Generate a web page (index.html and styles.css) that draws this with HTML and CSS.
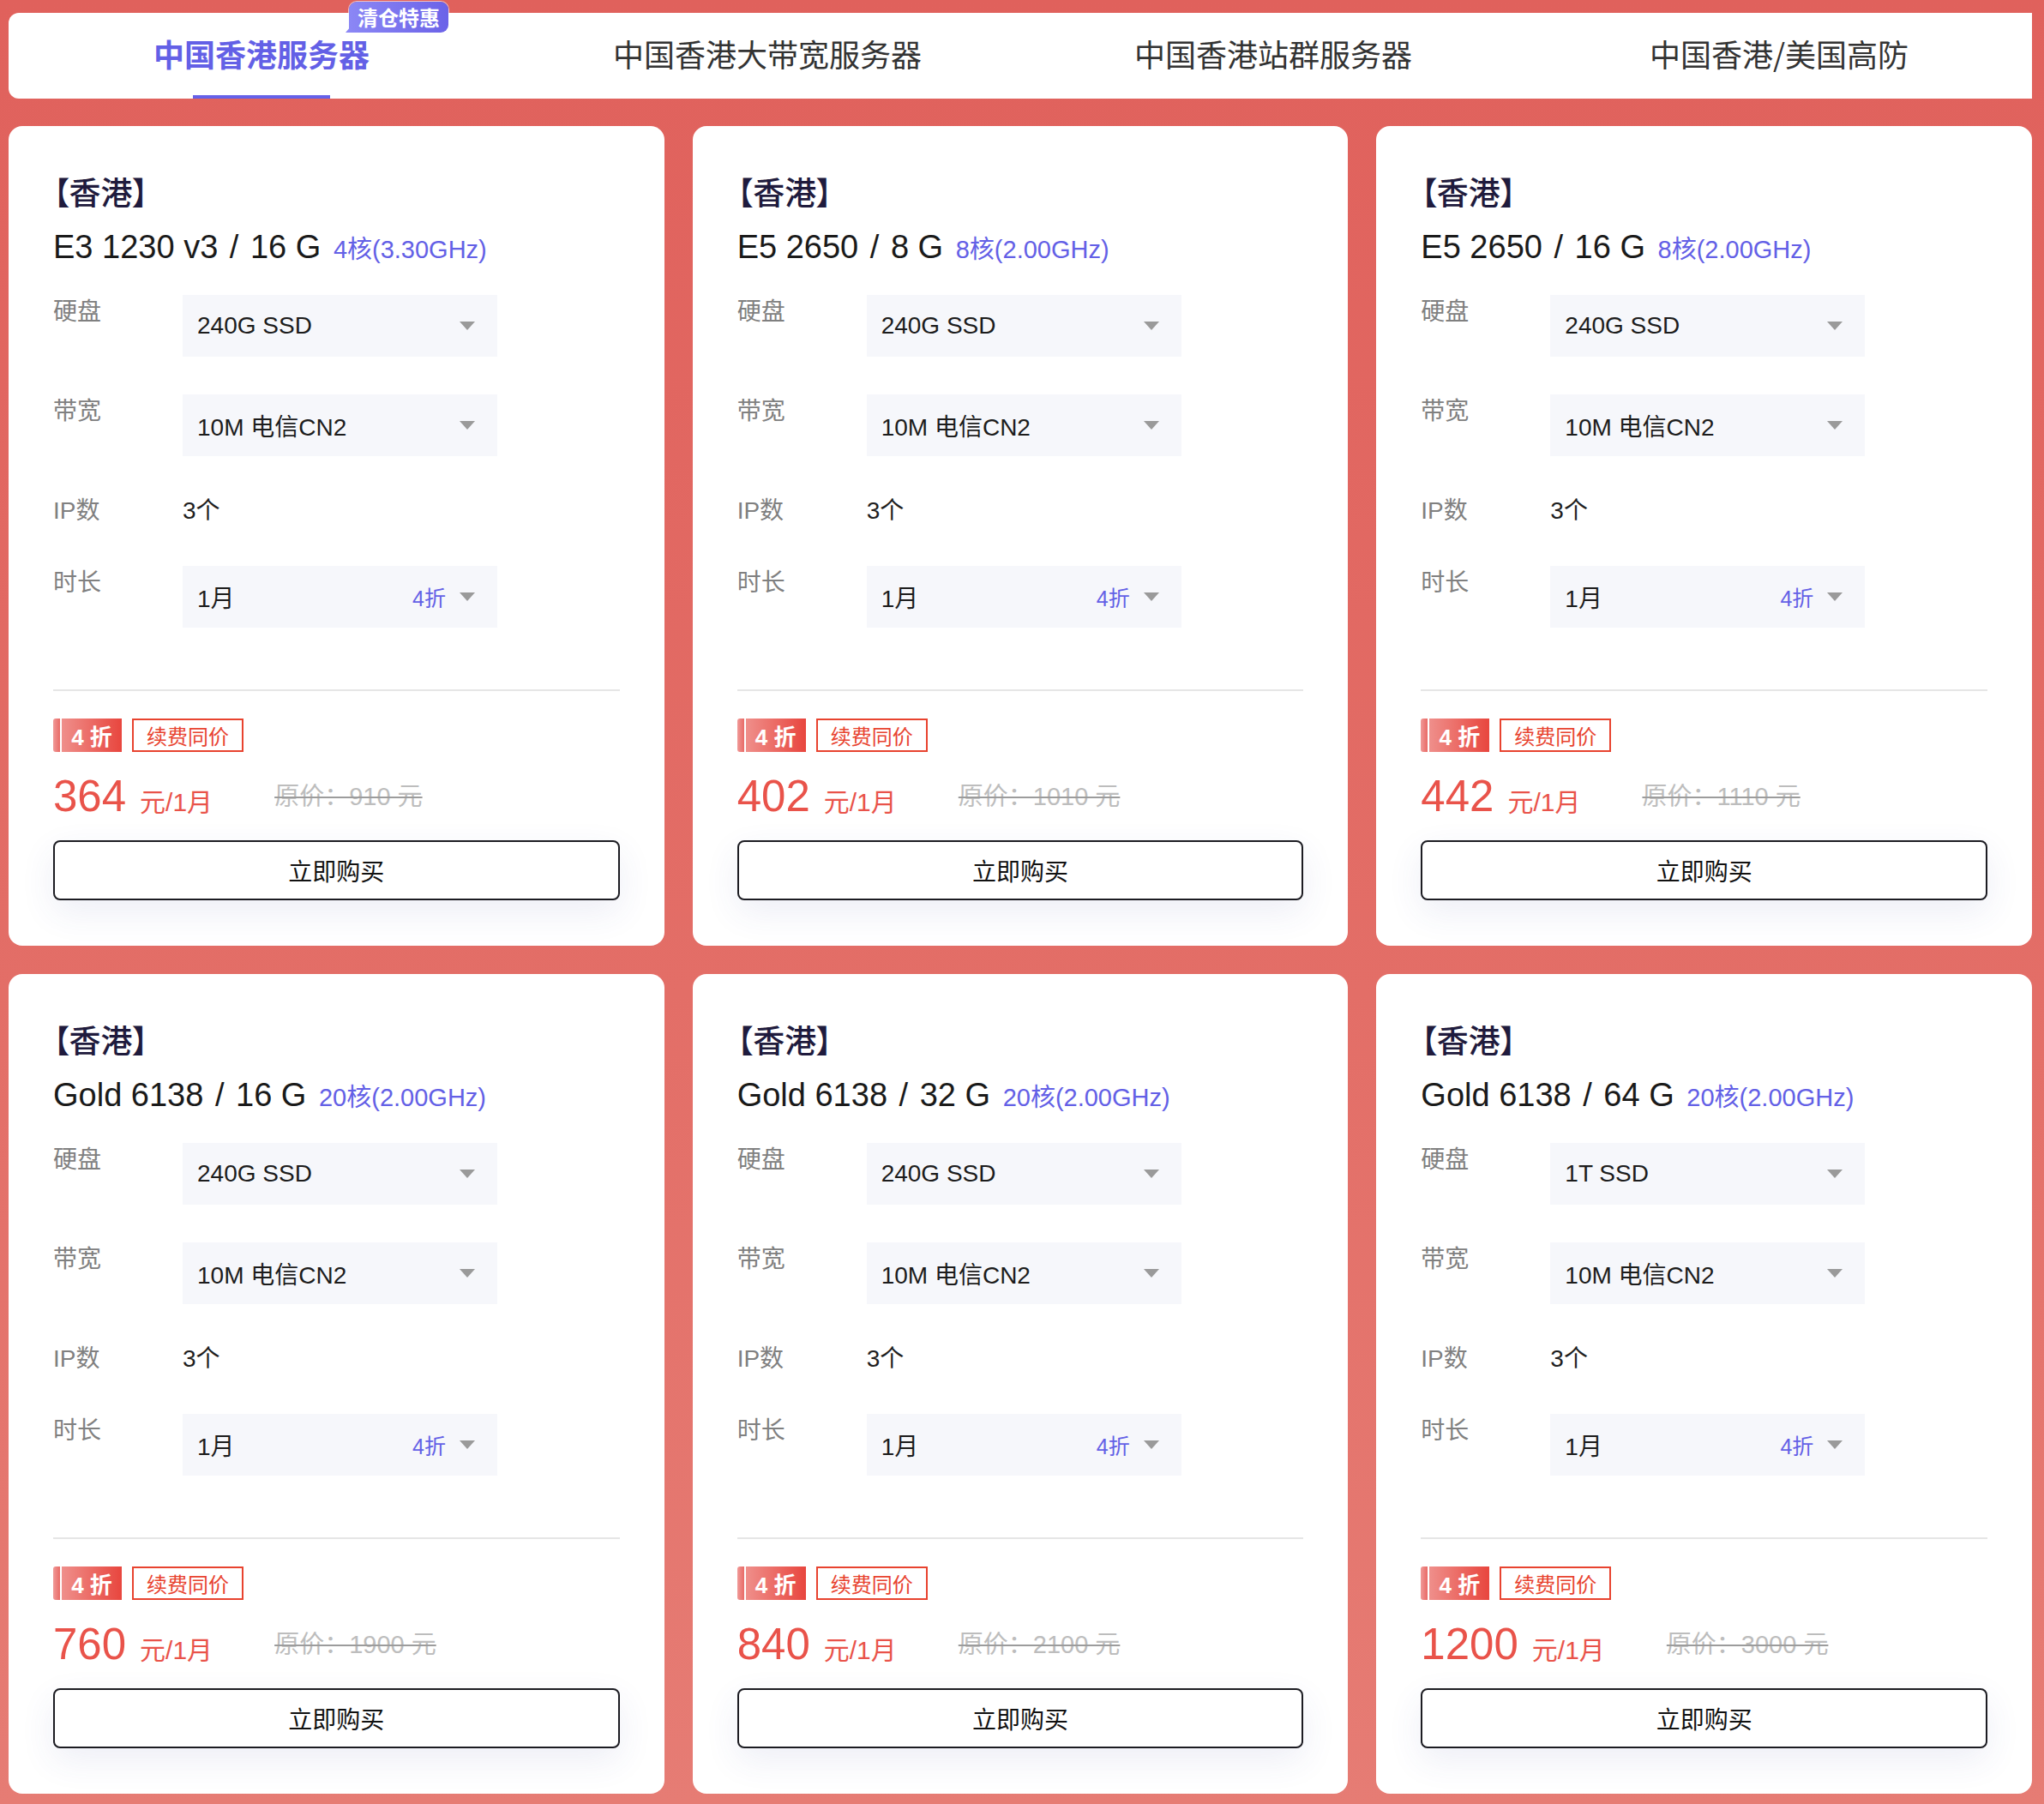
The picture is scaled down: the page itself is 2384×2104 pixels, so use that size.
FILE: index.html
```html
<!DOCTYPE html>
<html lang="zh-CN">
<head>
<meta charset="utf-8">
<title>中国香港服务器</title>
<link rel="stylesheet" href="styles.css">
</head>
<body>
<div class="page">
  <nav class="tabs">
    <div class="tab active"><span class="tab-text">中国香港服务器</span></div>
    <div class="tab"><span class="tab-text">中国香港大带宽服务器</span></div>
    <div class="tab"><span class="tab-text">中国香港站群服务器</span></div>
    <div class="tab"><span class="tab-text">中国香港/美国高防</span></div>
    <span class="badge">清仓特惠</span>
  </nav>

  <section class="cards">
    <article class="card">
      <h3 class="region">【香港】</h3>
      <div class="model">E3 1230 v3 <span class="sep">/</span> 16 G <span class="spec">4核(3.30GHz)</span></div>
      <div class="rows">
        <div class="row"><span class="label">硬盘</span><div class="select"><span>240G SSD</span><i class="caret"></i></div></div>
        <div class="row"><span class="label">带宽</span><div class="select"><span>10M 电信CN2</span><i class="caret"></i></div></div>
        <div class="row"><span class="label">IP数</span><span class="value">3个</span></div>
        <div class="row"><span class="label">时长</span><div class="select"><span>1月</span><span class="right"><em class="off">4折</em><i class="caret"></i></span></div></div>
      </div>
      <hr class="divider">
      <div class="tags"><span class="tag-off"><i class="notch"></i><b>4 折</b></span><span class="tag-line">续费同价</span></div>
      <div class="price"><span class="num">364</span><span class="unit">元/1月</span><span class="orig">原价：910 元</span></div>
      <button class="buy">立即购买</button>
    </article>

    <article class="card">
      <h3 class="region">【香港】</h3>
      <div class="model">E5 2650 <span class="sep">/</span> 8 G <span class="spec">8核(2.00GHz)</span></div>
      <div class="rows">
        <div class="row"><span class="label">硬盘</span><div class="select"><span>240G SSD</span><i class="caret"></i></div></div>
        <div class="row"><span class="label">带宽</span><div class="select"><span>10M 电信CN2</span><i class="caret"></i></div></div>
        <div class="row"><span class="label">IP数</span><span class="value">3个</span></div>
        <div class="row"><span class="label">时长</span><div class="select"><span>1月</span><span class="right"><em class="off">4折</em><i class="caret"></i></span></div></div>
      </div>
      <hr class="divider">
      <div class="tags"><span class="tag-off"><i class="notch"></i><b>4 折</b></span><span class="tag-line">续费同价</span></div>
      <div class="price"><span class="num">402</span><span class="unit">元/1月</span><span class="orig">原价：1010 元</span></div>
      <button class="buy">立即购买</button>
    </article>

    <article class="card">
      <h3 class="region">【香港】</h3>
      <div class="model">E5 2650 <span class="sep">/</span> 16 G <span class="spec">8核(2.00GHz)</span></div>
      <div class="rows">
        <div class="row"><span class="label">硬盘</span><div class="select"><span>240G SSD</span><i class="caret"></i></div></div>
        <div class="row"><span class="label">带宽</span><div class="select"><span>10M 电信CN2</span><i class="caret"></i></div></div>
        <div class="row"><span class="label">IP数</span><span class="value">3个</span></div>
        <div class="row"><span class="label">时长</span><div class="select"><span>1月</span><span class="right"><em class="off">4折</em><i class="caret"></i></span></div></div>
      </div>
      <hr class="divider">
      <div class="tags"><span class="tag-off"><i class="notch"></i><b>4 折</b></span><span class="tag-line">续费同价</span></div>
      <div class="price"><span class="num">442</span><span class="unit">元/1月</span><span class="orig">原价：1110 元</span></div>
      <button class="buy">立即购买</button>
    </article>

    <article class="card">
      <h3 class="region">【香港】</h3>
      <div class="model">Gold 6138 <span class="sep">/</span> 16 G <span class="spec">20核(2.00GHz)</span></div>
      <div class="rows">
        <div class="row"><span class="label">硬盘</span><div class="select"><span>240G SSD</span><i class="caret"></i></div></div>
        <div class="row"><span class="label">带宽</span><div class="select"><span>10M 电信CN2</span><i class="caret"></i></div></div>
        <div class="row"><span class="label">IP数</span><span class="value">3个</span></div>
        <div class="row"><span class="label">时长</span><div class="select"><span>1月</span><span class="right"><em class="off">4折</em><i class="caret"></i></span></div></div>
      </div>
      <hr class="divider">
      <div class="tags"><span class="tag-off"><i class="notch"></i><b>4 折</b></span><span class="tag-line">续费同价</span></div>
      <div class="price"><span class="num">760</span><span class="unit">元/1月</span><span class="orig">原价：1900 元</span></div>
      <button class="buy">立即购买</button>
    </article>

    <article class="card">
      <h3 class="region">【香港】</h3>
      <div class="model">Gold 6138 <span class="sep">/</span> 32 G <span class="spec">20核(2.00GHz)</span></div>
      <div class="rows">
        <div class="row"><span class="label">硬盘</span><div class="select"><span>240G SSD</span><i class="caret"></i></div></div>
        <div class="row"><span class="label">带宽</span><div class="select"><span>10M 电信CN2</span><i class="caret"></i></div></div>
        <div class="row"><span class="label">IP数</span><span class="value">3个</span></div>
        <div class="row"><span class="label">时长</span><div class="select"><span>1月</span><span class="right"><em class="off">4折</em><i class="caret"></i></span></div></div>
      </div>
      <hr class="divider">
      <div class="tags"><span class="tag-off"><i class="notch"></i><b>4 折</b></span><span class="tag-line">续费同价</span></div>
      <div class="price"><span class="num">840</span><span class="unit">元/1月</span><span class="orig">原价：2100 元</span></div>
      <button class="buy">立即购买</button>
    </article>

    <article class="card">
      <h3 class="region">【香港】</h3>
      <div class="model">Gold 6138 <span class="sep">/</span> 64 G <span class="spec">20核(2.00GHz)</span></div>
      <div class="rows">
        <div class="row"><span class="label">硬盘</span><div class="select"><span>1T SSD</span><i class="caret"></i></div></div>
        <div class="row"><span class="label">带宽</span><div class="select"><span>10M 电信CN2</span><i class="caret"></i></div></div>
        <div class="row"><span class="label">IP数</span><span class="value">3个</span></div>
        <div class="row"><span class="label">时长</span><div class="select"><span>1月</span><span class="right"><em class="off">4折</em><i class="caret"></i></span></div></div>
      </div>
      <hr class="divider">
      <div class="tags"><span class="tag-off"><i class="notch"></i><b>4 折</b></span><span class="tag-line">续费同价</span></div>
      <div class="price"><span class="num">1200</span><span class="unit">元/1月</span><span class="orig">原价：3000 元</span></div>
      <button class="buy">立即购买</button>
    </article>
  </section>
</div>
</body>
</html>
```

FILE: styles.css
```css
* { box-sizing: border-box; }

html, body {
  margin: 0;
  padding: 0;
}

body {
  width: 2384px;
  height: 2104px;
  overflow: hidden;
  font-family: "Liberation Sans", "Noto Sans CJK SC", sans-serif;
  color: #1a1a1a;
  background: linear-gradient(180deg, #e0615c 0%, #e36e67 55%, #e67c74 100%);
}

.page {
  padding: 15px 14px 0 10px;
}

/* ---------- tabs ---------- */
.tabs {
  position: relative;
  display: grid;
  grid-template-columns: repeat(4, 1fr);
  height: 100px;
  background: #fff;
  border-radius: 12px 0 0 12px;
}

.tab {
  position: relative;
  display: flex;
  align-items: center;
  justify-content: center;
  padding-bottom: 6px;
  font-size: 36px;
  color: #333;
  font-family: "Noto Sans CJK SC", sans-serif;
}

.tab.active {
  color: #6360e6;
  font-weight: 700;
}

.tab.active::after {
  content: "";
  position: absolute;
  left: 50%;
  bottom: 0;
  width: 160px;
  height: 4px;
  margin-left: -80px;
  background: #6561e8;
}

.badge {
  position: absolute;
  left: 397px;
  top: -13px;
  height: 36px;
  padding: 0 10px;
  border-radius: 9px 9px 9px 2px;
  background: linear-gradient(90deg, #8b87f5 0%, #6b62e8 100%);
  box-shadow: 0 0 0 1px rgba(255, 255, 255, 0.6);
  color: #fff;
  font-family: "Noto Sans CJK SC", sans-serif;
  font-size: 24px;
  font-weight: 700;
  line-height: 36px;
}

.badge::before {
  content: "";
  position: absolute;
  left: -4px;
  bottom: 0;
  width: 0;
  height: 0;
  border-left: 6px solid transparent;
  border-bottom: 7px solid #8b87f5;
}

/* ---------- cards ---------- */
.cards {
  margin-top: 32px;
  display: grid;
  grid-template-columns: repeat(3, 1fr);
  gap: 33px;
}

.card {
  background: #fff;
  border-radius: 16px;
  padding: 52px 52px 52px;
  height: 956px;
}

.region {
  margin: 0;
  font-family: "Noto Sans CJK SC", sans-serif;
  font-feature-settings: "palt";
  font-size: 37px;
  font-weight: 500;
  line-height: 48px;
  color: #1f1b3d;
}

.model {
  margin-top: 17px;
  font-size: 38px;
  line-height: 48px;
  color: #1a1a1a;
  white-space: nowrap;
}

.model .sep {
  margin: 0 3px;
}

.spec {
  margin-left: 4px;
  font-size: 29px;
  color: #6360e6;
}

.rows {
  margin-top: 29px;
  display: flex;
  flex-direction: column;
  gap: 44px;
}

.row {
  display: flex;
  align-items: flex-start;
}

.label {
  width: 151px;
  flex: none;
  font-size: 28px;
  line-height: 40px;
  color: #808080;
}

.value {
  font-size: 28px;
  line-height: 40px;
  color: #1f1f1f;
}

.select {
  width: 367px;
  height: 72px;
  padding: 0 26px 0 17px;
  display: flex;
  align-items: center;
  justify-content: space-between;
  background: #f6f7fb;
  font-size: 28px;
  color: #1c1c1c;
}

.select .right {
  display: flex;
  align-items: center;
  gap: 16px;
}

.off {
  font-style: normal;
  font-size: 25px;
  color: #6360e6;
}

.caret {
  display: block;
  width: 0;
  height: 0;
  border-left: 9px solid transparent;
  border-right: 9px solid transparent;
  border-top: 10px solid #9a9a9a;
}

.divider {
  margin: 72px 0 0;
  border: 0;
  height: 2px;
  background: #e6e6e6;
}

/* tags */
.tags {
  margin-top: 32px;
  display: flex;
  align-items: stretch;
  height: 39px;
}

.tag-off {
  display: flex;
  width: 80px;
  height: 39px;
}

.tag-off .notch {
  display: block;
  width: 8px;
  margin-right: 2px;
  border-radius: 3px 0 0 3px;
  background: linear-gradient(90deg, #f09a98, #e96a66);
}

.tag-off b {
  flex: 1;
  display: flex;
  align-items: center;
  justify-content: center;
  background: linear-gradient(90deg, #ef8f8b 0%, #e8463e 100%);
  color: #fff;
  font-size: 26px;
  font-weight: 700;
  white-space: pre;
}

.tag-line {
  margin-left: 12px;
  padding: 0 15px;
  display: flex;
  align-items: center;
  border: 2px solid #e8432f;
  color: #e8432f;
  font-size: 24px;
}

/* price */
.price {
  margin-top: 22px;
  display: flex;
  align-items: baseline;
  height: 60px;
  line-height: 60px;
  white-space: nowrap;
}

.num {
  font-size: 51px;
  color: #e9534a;
}

.unit {
  margin-left: 16px;
  font-size: 30px;
  color: #e9534a;
}

.orig {
  align-self: center;
  margin-left: 72px;
  font-size: 29px;
  line-height: 1.2;
  color: #bdbdbd;
  text-decoration: line-through;
  text-decoration-color: #9c9c9c;
  text-decoration-thickness: 2px;
}

/* button */
.buy {
  display: block;
  width: 100%;
  height: 70px;
  margin-top: 21px;
  padding: 0;
  border: 2.5px solid #1c1c22;
  border-radius: 8px;
  background: #fff;
  font-family: "Liberation Sans", "Noto Sans CJK SC", sans-serif;
  font-size: 28px;
  color: #111;
  box-shadow: 0 14px 40px rgba(50, 70, 150, 0.09);
  cursor: pointer;
}
```
